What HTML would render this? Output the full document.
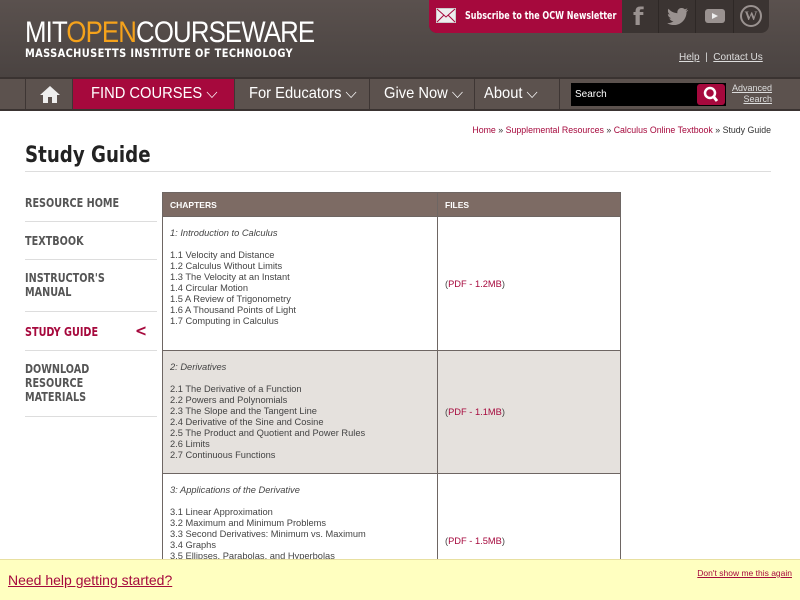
<!DOCTYPE html>
<html style="width:800px;height:600px;overflow:hidden"><head><meta charset="utf-8"><style>
*{margin:0;padding:0;box-sizing:border-box}
body{width:800px;height:600px;overflow:hidden;font-family:"Liberation Sans",sans-serif;background:#fff;position:relative}
.hdr{position:absolute;left:0;top:0;width:800px;height:77px;background:linear-gradient(#5a514e,#4a4341)}
.nav{position:absolute;left:0;top:77px;width:800px;height:34px;background:#5c524e;border-top:2px solid #3a3331;border-bottom:2px solid #3a3331}
.nav div{position:absolute;top:0;height:30px;color:#fff;font-size:16px;line-height:30px;border-left:1px solid #3e3634}
.nav span.t{display:inline-block;transform:scaleX(0.92);transform-origin:left}
a{color:#a6093d}
.side{position:absolute;left:25px;width:132px;font-weight:bold;font-size:12.5px;color:#555;font-family:"DejaVu Sans Condensed",sans-serif;border-bottom:1px solid #ddd}
.side span.s{display:inline-block;transform:scaleX(0.86);transform-origin:left}
.wrap{position:absolute;left:162px;top:192px;width:460px;height:367px;overflow:hidden}
table{width:459px;border-collapse:collapse;font-size:9.3px;color:#444}
td,th{border:1px solid #6e6663;vertical-align:middle;padding:0 7px}
th{background:#7d6b64;color:#fff;text-align:left;height:24px;font-size:8.5px}
td.c{vertical-align:top;padding-top:11px;line-height:11px}
.ic{position:absolute;top:0;height:33px;border-left:1px solid #2e2826}
</style></head><body>
<div class="hdr">
<div style="position:absolute;left:25px;top:16px;font-size:30px;color:#fff;letter-spacing:-1px;transform:scaleX(0.86);transform-origin:left;white-space:nowrap">MIT<span style="color:#f5a21b">OPEN</span>COURSEWARE</div>
<div style="position:absolute;left:25px;top:46px;font-size:11.5px;color:#fff;font-weight:bold;letter-spacing:0.4px;font-family:'DejaVu Sans Condensed',sans-serif;transform:scaleX(0.95);transform-origin:left;white-space:nowrap">MASSACHUSETTS INSTITUTE OF TECHNOLOGY</div>
<div style="position:absolute;left:429px;top:0;width:340px;height:33px;background:#3b3432;border-radius:0 0 8px 8px"></div>
<div style="position:absolute;left:429px;top:0;width:193px;height:33px;background:#a6093d;border-radius:0 0 0 8px"></div>
<svg style="position:absolute;left:436px;top:8px" width="20" height="15"><rect x="0.5" y="0.5" width="19" height="14" fill="#eee" stroke="#ccc"/><path d="M1 1L10 9L19 1M1 14L8 7M19 14L12 7" stroke="#a6093d" fill="none"/></svg>
<div style="position:absolute;left:465px;top:10px;font-size:10.5px;color:#fff;font-weight:bold;font-family:'DejaVu Sans Condensed',sans-serif;transform:scaleX(0.85);transform-origin:left;white-space:nowrap">Subscribe to the OCW Newsletter</div>
<div class="ic" style="left:622px;width:36px;border:none"><div style="position:absolute;left:11px;top:3px;font-size:24px;color:#9a9290;font-weight:bold;font-family:'DejaVu Sans',sans-serif">f</div></div>
<div class="ic" style="left:658px;width:37px"><svg style="position:absolute;left:8px;top:8px" width="21" height="17"><path d="M21 2c-.8.4-1.6.6-2.5.7.9-.5 1.6-1.4 1.9-2.4-.8.5-1.8.9-2.7 1-1.6-1.7-4.4-1.8-6.1-.1-1.1 1-1.5 2.6-1.2 4C6.8 5 3.6 3.4 1.5.8.3 2.8 1 5.3 2.9 6.5c-.7 0-1.4-.2-2-.5 0 2 1.5 3.8 3.4 4.2-.6.2-1.3.2-1.9.1.6 1.8 2.2 3 4.1 3-1.8 1.4-4 2-6.3 1.8 2 1.3 4.3 2 6.7 2 8.2 0 12.8-7 12.6-13.2.9-.6 1.6-1.4 2.2-2.3z" fill="#9a9290"/></svg></div>
<div class="ic" style="left:695px;width:38px"><div style="position:absolute;left:9px;top:9px;width:20px;height:14px;background:#9a9290;border-radius:3px"></div><svg style="position:absolute;left:16px;top:13px" width="6" height="6"><path d="M0 0L6 3L0 6Z" fill="#eee"/></svg></div>
<div class="ic" style="left:733px;width:36px"><div style="position:absolute;left:6px;top:5px;width:22px;height:22px;border:2px solid #9a9290;border-radius:50%;color:#9a9290;font-size:13px;font-weight:bold;text-align:center;line-height:18px;font-family:'Liberation Serif',serif">W</div></div>
<div style="position:absolute;left:679px;top:52px;font-size:10px;color:#ddd"><u>Help</u> &nbsp;| &nbsp;<u>Contact Us</u></div>
</div>
<div class="nav">
<div style="left:25px;width:47px;border-left:1px solid #3e3634"><svg style="margin:6px 0 0 14px" width="20" height="18"><path d="M10 1L0 10H3V18H8V12H12V18H17V10H20Z" fill="#eee"/></svg></div>
<div style="left:72px;width:162px;background:#a6093d;padding-left:18px"><span class="t">FIND COURSES ⌵</span></div>
<div style="left:234px;width:135px;padding-left:14px"><span class="t">For Educators ⌵</span></div>
<div style="left:369px;width:105px;padding-left:14px"><span class="t">Give Now ⌵</span></div>
<div style="left:474px;width:85px;padding-left:9px"><span class="t">About ⌵</span></div>
<div style="left:559px;width:241px;border-left:1px solid #3e3634"></div>
<div style="position:absolute;left:571px;top:4px;width:155px;height:23px;background:#000;border:none;font-size:10px;line-height:23px;padding-left:4px">Search</div>
<div style="position:absolute;left:697px;top:5px;width:28px;height:21px;background:#a6093d;border:none;border-radius:3px"><svg width="28" height="21"><circle cx="13" cy="9" r="5" stroke="#fff" stroke-width="2.5" fill="none"/><path d="M16 12L20 17" stroke="#fff" stroke-width="3"/></svg></div>
<div style="position:absolute;left:730px;top:4px;width:42px;border:none;font-size:9px;line-height:11px;text-align:right;color:#ddd"><u>Advanced</u><br><u>Search</u></div>
</div>
<div style="position:absolute;right:29px;top:125px;font-size:8.8px;color:#333"><a style="text-decoration:none">Home</a> » <a style="text-decoration:none">Supplemental Resources</a> » <a style="text-decoration:none">Calculus Online Textbook</a> » Study Guide</div>
<div style="position:absolute;left:25px;top:143px;font-size:22px;font-weight:bold;color:#222;font-family:'DejaVu Sans Condensed',sans-serif;transform:scaleX(0.92);transform-origin:left">Study Guide</div>
<div style="position:absolute;left:25px;top:171px;width:746px;height:1px;background:#ddd"></div>
<div class="side" style="top:195px;height:27px"><span class="s">RESOURCE HOME</span></div>
<div class="side" style="top:233px;height:27px"><span class="s">TEXTBOOK</span></div>
<div class="side" style="top:271px;height:41px;line-height:14px"><span class="s">INSTRUCTOR'S<br>MANUAL</span></div>
<div class="side" style="top:324px;height:27px;color:#a6093d"><span class="s">STUDY GUIDE</span><span style="position:absolute;right:10px;font-size:16px;top:-3px">&lt;</span></div>
<div class="side" style="top:362px;height:55px;line-height:14px"><span class="s">DOWNLOAD<br>RESOURCE<br>MATERIALS</span></div>
<div class="wrap"><table>
<tr><th style="width:275px">CHAPTERS</th><th>FILES</th></tr>
<tr style="height:134px"><td class="c"><i>1: Introduction to Calculus</i><br><br>1.1 Velocity and Distance<br>1.2 Calculus Without Limits<br>1.3 The Velocity at an Instant<br>1.4 Circular Motion<br>1.5 A Review of Trigonometry<br>1.6 A Thousand Points of Light<br>1.7 Computing in Calculus</td><td>(<a>PDF - 1.2MB</a>)</td></tr>
<tr style="height:123px;background:#e5e1dd"><td class="c"><i>2: Derivatives</i><br><br>2.1 The Derivative of a Function<br>2.2 Powers and Polynomials<br>2.3 The Slope and the Tangent Line<br>2.4 Derivative of the Sine and Cosine<br>2.5 The Product and Quotient and Power Rules<br>2.6 Limits<br>2.7 Continuous Functions</td><td>(<a>PDF - 1.1MB</a>)</td></tr>
<tr style="height:134px"><td class="c"><i>3: Applications of the Derivative</i><br><br>3.1 Linear Approximation<br>3.2 Maximum and Minimum Problems<br>3.3 Second Derivatives: Minimum vs. Maximum<br>3.4 Graphs<br>3.5 Ellipses, Parabolas, and Hyperbolas<br>3.6 Iterations</td><td>(<a>PDF - 1.5MB</a>)</td></tr>
</table></div>
<div style="position:absolute;left:0;top:559px;width:800px;height:41px;background:#ffffc0;border-top:1px solid #e8e0a0;z-index:5">
<div style="position:absolute;left:8px;top:12px;font-size:14px;color:#a6093d;text-decoration:underline">Need help getting started?</div>
<div style="position:absolute;right:8px;top:8px;font-size:8.5px;color:#a6093d;text-decoration:underline">Don't show me this again</div>
</div>
</body></html>
